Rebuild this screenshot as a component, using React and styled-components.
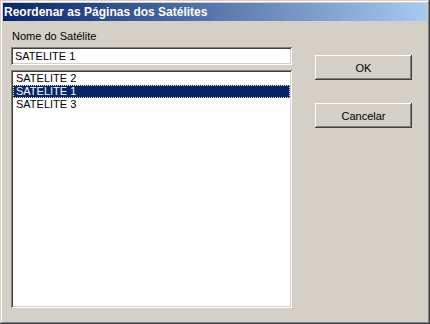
import styled, { createGlobalStyle } from "styled-components";

const Global = createGlobalStyle`
  html, body {
    margin: 0;
    padding: 0;
    background: #d4d0c8;
  }
  * {
    box-sizing: border-box;
  }
`;

const Window = styled.div`
  width: 430px;
  height: 324px;
  background: #d4d0c8;
  padding: 3px;
  box-shadow: inset -1px -1px #404040, inset 1px 1px #d4d0c8,
    inset -2px -2px #808080, inset 2px 2px #ffffff;
  font-family: "Liberation Sans", Arial, sans-serif;
  font-size: 11px;
  color: #000;
  display: flex;
  flex-direction: column;
`;

const TitleBar = styled.div`
  height: 18px;
  background: linear-gradient(to right, #0a246a, #a6caf0);
  color: #fff;
  font-weight: bold;
  font-size: 12px;
  line-height: 18px;
  padding-left: 1px;
  white-space: nowrap;
`;

const Body = styled.div`
  flex: 1;
  display: flex;
  gap: 23px;
  padding: 9px 0 0 8px;
`;

const LeftColumn = styled.div`
  width: 281px;
  display: flex;
  flex-direction: column;
`;

const Label = styled.div`
  line-height: 13px;
  height: 13px;
  padding-left: 1px;
  margin-bottom: 4px;
`;

const Sunken = styled.div`
  background: #fff;
  box-shadow: inset 1px 1px #808080, inset -1px -1px #ffffff,
    inset 2px 2px #404040, inset -2px -2px #d4d0c8;
`;

const TextField = styled(Sunken)`
  height: 18px;
  line-height: 18px;
  padding-left: 4px;
  margin-bottom: 5px;
`;

const ListBox = styled(Sunken)`
  height: 238px;
  padding: 2px;
`;

const Row = styled.div`
  height: 13px;
  line-height: 13px;
  padding-left: 3px;
  background: ${(p) => (p.$selected ? "#0a246a" : "transparent")};
  color: ${(p) => (p.$selected ? "#fff" : "#000")};
  outline: ${(p) => (p.$selected ? "1px dotted #f5f0b8" : "none")};
  outline-offset: -1px;
`;

const RightColumn = styled.div`
  display: flex;
  flex-direction: column;
  gap: 23px;
  padding-top: 25px;
`;

const Button = styled.button`
  width: 97px;
  height: 25px;
  background: #d4d0c8;
  border: none;
  font-family: inherit;
  font-size: 11px;
  color: #000;
  padding: 0;
  box-shadow: inset -1px -1px #404040, inset 1px 1px #ffffff,
    inset -2px -2px #808080, inset 2px 2px #d4d0c8;
`;

const satellites = [
  { name: "SATELITE 2" },
  { name: "SATELITE 1", selected: true },
  { name: "SATELITE 3" },
];

export default function App() {
  return (
    <>
      <Global />
      <Window>
        <TitleBar>Reordenar as Páginas dos Satélites</TitleBar>
        <Body>
          <LeftColumn>
            <Label>Nome do Satélite</Label>
            <TextField>SATELITE 1</TextField>
            <ListBox>
              {satellites.map((s) => (
                <Row key={s.name} $selected={s.selected}>
                  {s.name}
                </Row>
              ))}
            </ListBox>
          </LeftColumn>
          <RightColumn>
            <Button>OK</Button>
            <Button>Cancelar</Button>
          </RightColumn>
        </Body>
      </Window>
    </>
  );
}
